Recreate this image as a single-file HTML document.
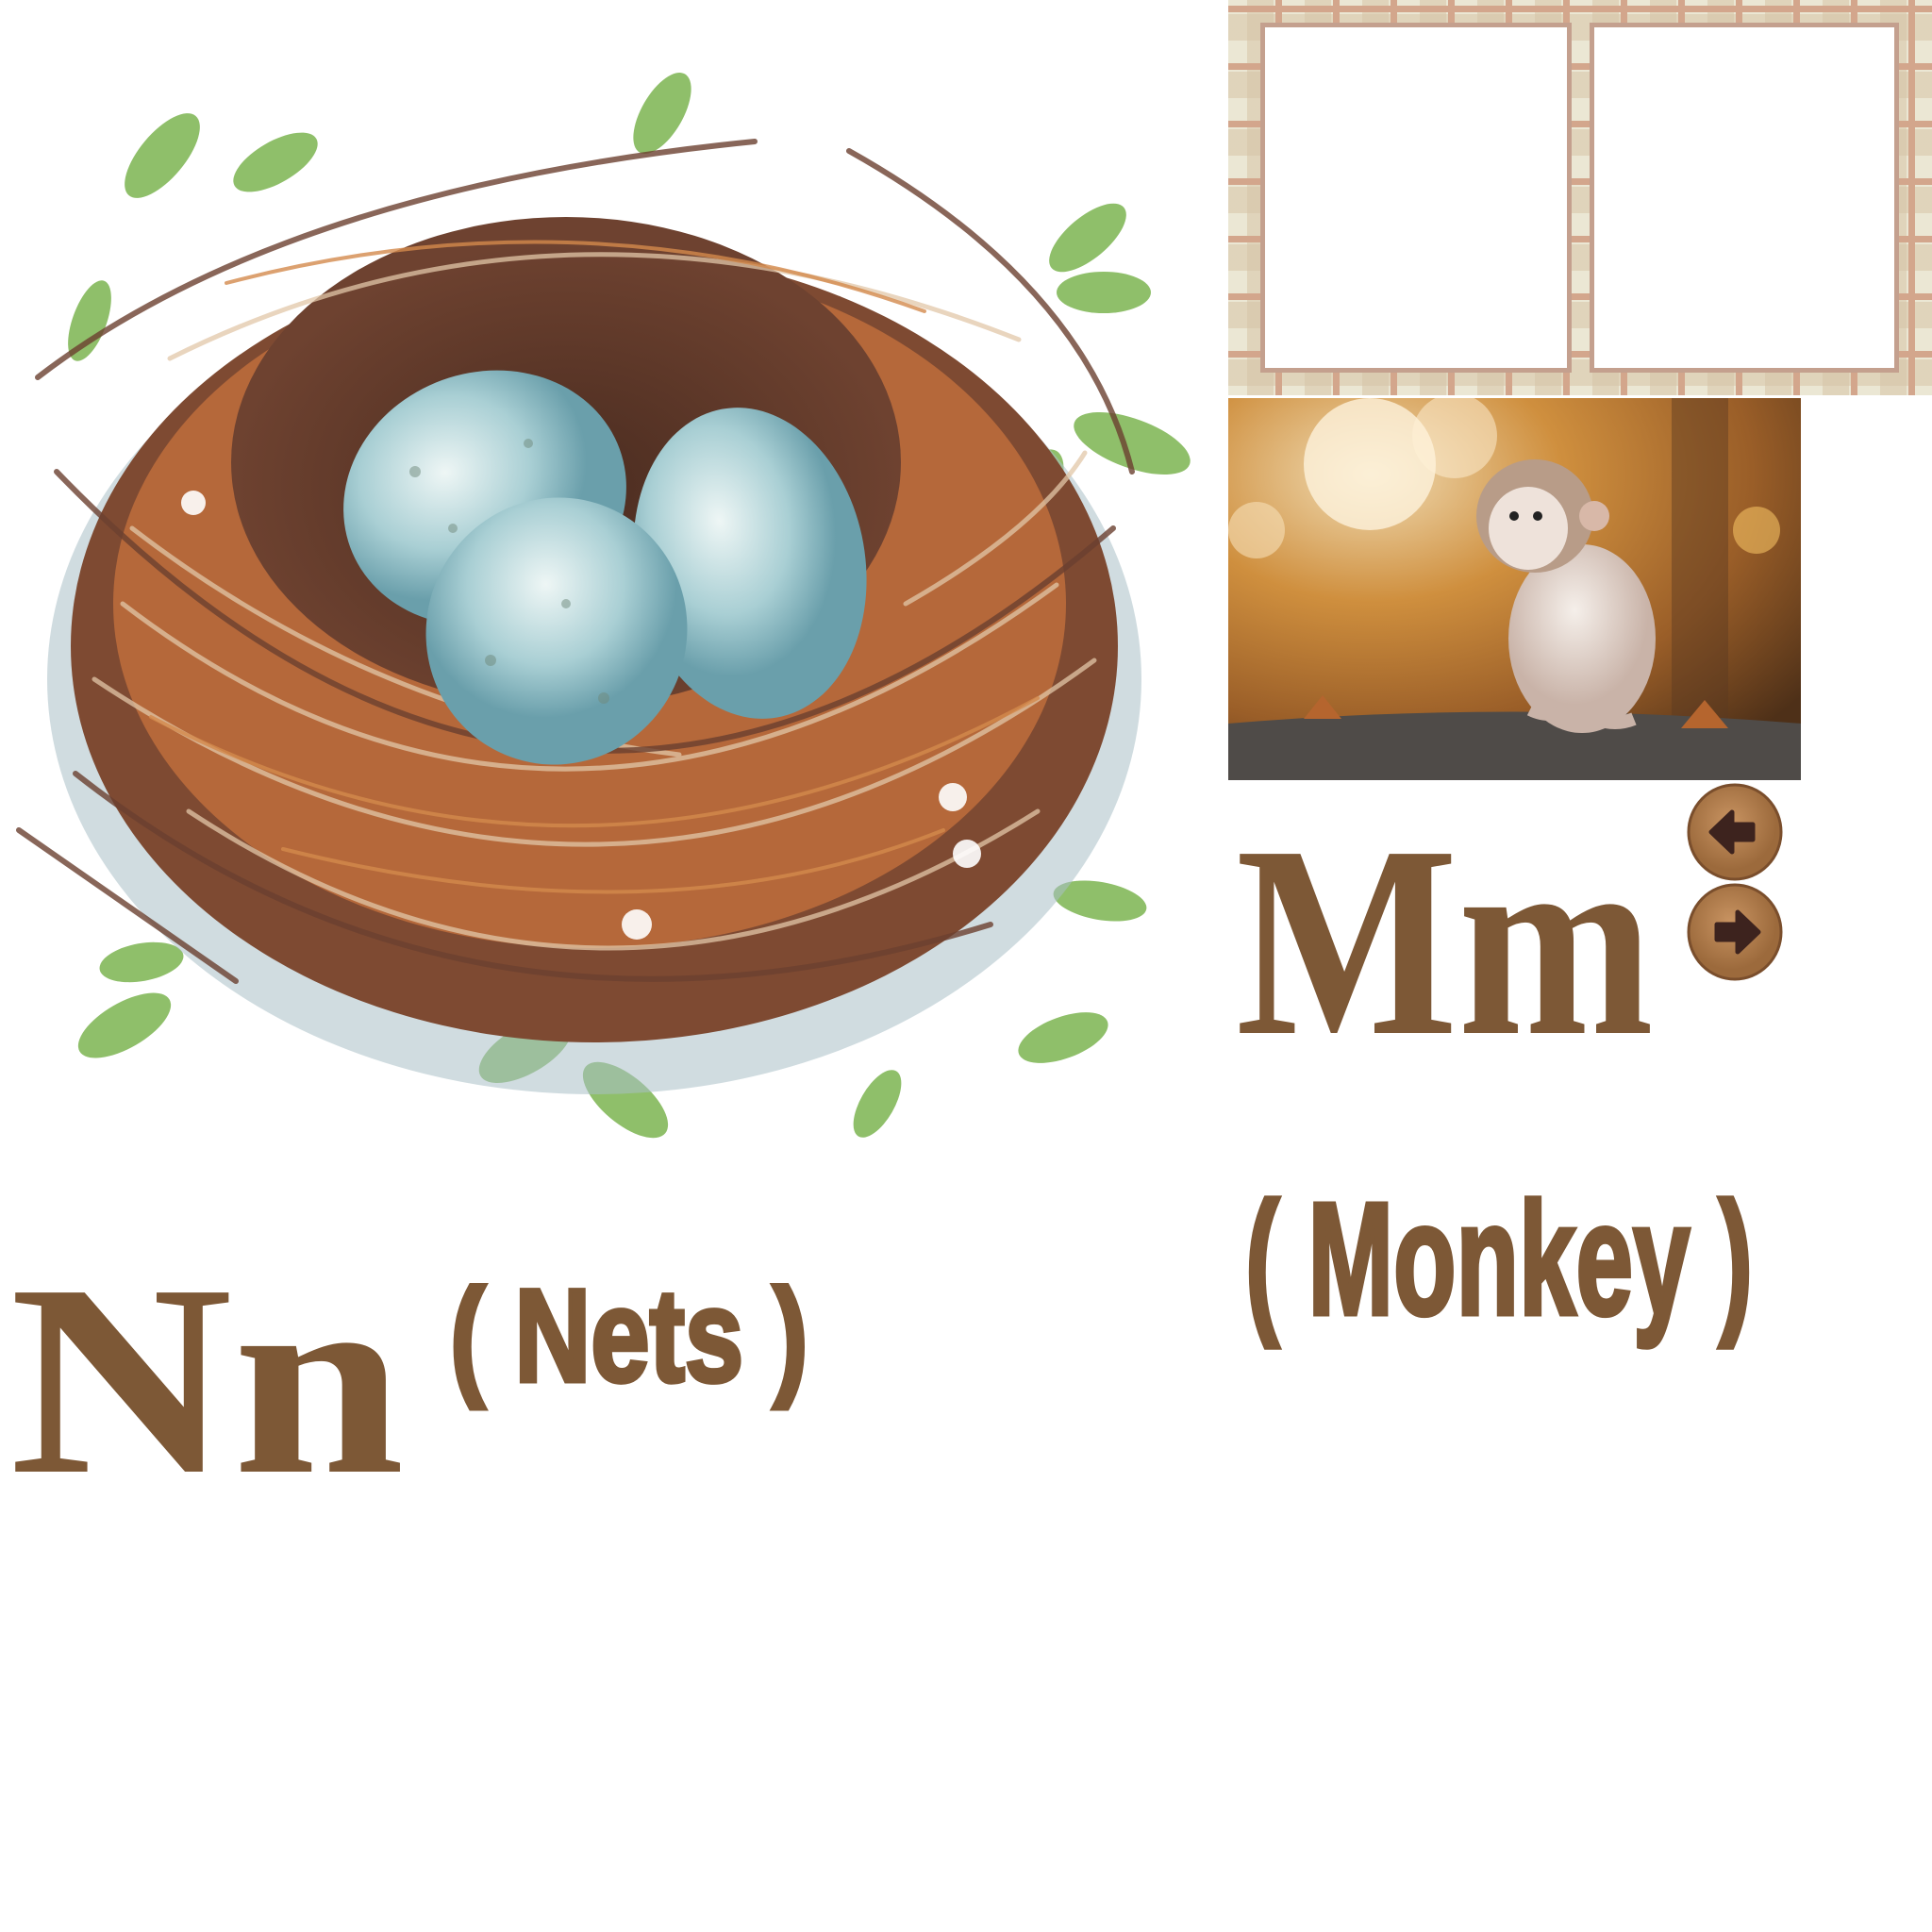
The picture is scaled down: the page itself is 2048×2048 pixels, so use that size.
<!DOCTYPE html>
<html><head><meta charset="utf-8"><style>
body{margin:0;width:2048px;height:2048px;background:#fff;position:relative;overflow:hidden;font-family:"Liberation Serif",serif}
.abs{position:absolute;white-space:nowrap}
.plaid{left:1302px;top:0;width:746px;height:419px;background-color:#ebe7d4;
background-image:
repeating-linear-gradient(90deg,transparent 0 50px,#d3a68c 50px 57px,transparent 57px 61px),
repeating-linear-gradient(0deg,transparent 0 40px,#d3a68c 40px 47px,transparent 47px 61px),
repeating-linear-gradient(90deg,transparent 0 20px,rgba(214,196,166,.55) 20px 48px,transparent 48px 61px),
repeating-linear-gradient(0deg,transparent 0 10px,rgba(214,196,166,.55) 10px 38px,transparent 38px 61px);}
.box{background:#fff;border:5px solid #c4a08e;top:24px;box-sizing:border-box;height:371px}
.big{color:#7d5836;font-weight:bold;font-size:290px;line-height:1;transform-origin:left top}
.cond{color:#7d5836;font-weight:bold;font-family:"Liberation Sans",sans-serif;transform-origin:left top;line-height:1;-webkit-text-stroke:5px #7d5836}
</style></head><body>
<svg class="abs" style="left:0;top:0" width="1300" height="1260" viewBox="0 0 1300 1260">
<defs>
<radialGradient id="egg" cx="40%" cy="35%"><stop offset="0" stop-color="#eef6f5"/><stop offset=".6" stop-color="#a9cfd4"/><stop offset="1" stop-color="#6a9fab"/></radialGradient>
<radialGradient id="cav" cx="50%" cy="55%"><stop offset="0" stop-color="#4a2c20"/><stop offset="1" stop-color="#6e4230"/></radialGradient>
</defs>
<g fill="#8fbf6a">
<ellipse cx="172" cy="165" rx="55" ry="24" transform="rotate(-50 172 165)"/>
<ellipse cx="292" cy="172" rx="50" ry="22" transform="rotate(-30 292 172)"/>
<ellipse cx="702" cy="120" rx="48" ry="22" transform="rotate(-60 702 120)"/>
<ellipse cx="1153" cy="252" rx="50" ry="22" transform="rotate(-40 1153 252)"/>
<ellipse cx="1170" cy="310" rx="50" ry="22" transform="rotate(0 1170 310)"/>
<ellipse cx="1200" cy="470" rx="65" ry="26" transform="rotate(20 1200 470)"/>
<ellipse cx="1090" cy="530" rx="60" ry="26" transform="rotate(-60 1090 530)"/>
<ellipse cx="1040" cy="490" rx="50" ry="22" transform="rotate(-20 1040 490)"/>
<ellipse cx="265" cy="545" rx="55" ry="22" transform="rotate(-20 265 545)"/>
<ellipse cx="160" cy="570" rx="50" ry="20" transform="rotate(15 160 570)"/>
<ellipse cx="1166" cy="955" rx="50" ry="20" transform="rotate(10 1166 955)"/>
<ellipse cx="132" cy="1087" rx="55" ry="24" transform="rotate(-30 132 1087)"/>
<ellipse cx="150" cy="1020" rx="45" ry="20" transform="rotate(-10 150 1020)"/>
<ellipse cx="557" cy="1113" rx="55" ry="25" transform="rotate(-30 557 1113)"/>
<ellipse cx="663" cy="1166" rx="55" ry="25" transform="rotate(40 663 1166)"/>
<ellipse cx="955" cy="928" rx="45" ry="22" transform="rotate(-50 955 928)"/>
<ellipse cx="1127" cy="1100" rx="50" ry="22" transform="rotate(-20 1127 1100)"/>
<ellipse cx="95" cy="340" rx="45" ry="18" transform="rotate(-70 95 340)"/>
<ellipse cx="930" cy="1170" rx="40" ry="18" transform="rotate(-60 930 1170)"/>
</g>
<ellipse cx="630" cy="720" rx="580" ry="440" fill="#a9bfc6" opacity=".55"/>
<ellipse cx="630" cy="685" rx="555" ry="420" fill="#7e4a32"/>
<ellipse cx="625" cy="640" rx="505" ry="365" fill="#b5683a"/>
<ellipse cx="600" cy="490" rx="355" ry="260" fill="url(#cav)"/>
<g fill="none" stroke-linecap="round">
<g stroke="#e2c7a8" stroke-width="5" opacity=".75">
<path d="M130 640 Q600 1000 1120 620"/><path d="M100 720 Q640 1080 1160 700"/><path d="M180 380 Q600 170 1080 360"/><path d="M200 860 Q640 1150 1100 860"/><path d="M140 560 Q400 760 720 800"/><path d="M960 640 Q1100 560 1150 480"/>
</g>
<g stroke="#6b4030" stroke-width="6" opacity=".8">
<path d="M60 500 Q600 1060 1180 560"/><path d="M40 400 Q300 200 800 150"/><path d="M900 160 Q1150 300 1200 500"/><path d="M80 820 Q500 1150 1050 980"/><path d="M20 880 L250 1040"/>
</g>
<g stroke="#d38a4c" stroke-width="4" opacity=".8">
<path d="M240 300 Q620 200 980 330"/><path d="M160 760 Q620 1000 1100 740"/><path d="M300 900 Q700 1000 1000 880"/>
</g>
</g>
<ellipse cx="514" cy="528" rx="152" ry="133" fill="url(#egg)" transform="rotate(-20 514 528)"/>
<ellipse cx="795" cy="597" rx="122" ry="166" fill="url(#egg)" transform="rotate(-10 795 597)"/>
<ellipse cx="590" cy="669" rx="138" ry="142" fill="url(#egg)" transform="rotate(20 590 669)"/>
<g fill="#6f8a7c" opacity=".5"><circle cx="440" cy="500" r="6"/><circle cx="480" cy="560" r="5"/><circle cx="560" cy="470" r="5"/><circle cx="520" cy="700" r="6"/><circle cx="600" cy="640" r="5"/><circle cx="640" cy="740" r="6"/></g>
<g fill="#fff" opacity=".9"><circle cx="675" cy="980" r="16"/><circle cx="1010" cy="845" r="15"/><circle cx="1025" cy="905" r="15"/><circle cx="205" cy="533" r="13"/></g>
</svg>
<div class="abs plaid"></div>
<div class="abs box" style="left:1336px;width:330px"></div>
<div class="abs box" style="left:1685px;width:328px"></div>
<svg class="abs" style="left:1302px;top:422px" width="607" height="405" viewBox="0 0 607 405">
<defs><radialGradient id="bk" cx="25%" cy="20%" r="95%"><stop offset="0" stop-color="#f0dcb4"/><stop offset=".35" stop-color="#cf8f3e"/><stop offset=".7" stop-color="#9a5e28"/><stop offset="1" stop-color="#4e3018"/></radialGradient>
<radialGradient id="mk" cx="45%" cy="35%"><stop offset="0" stop-color="#f5efea"/><stop offset="1" stop-color="#c9b3a8"/></radialGradient></defs>
<rect width="607" height="405" fill="url(#bk)"/>
<rect x="470" y="0" width="60" height="340" fill="#5a3a22" opacity=".45"/>
<circle cx="150" cy="70" r="70" fill="#fff6e2" opacity=".75"/>
<circle cx="240" cy="40" r="45" fill="#fff1d8" opacity=".5"/>
<circle cx="30" cy="140" r="30" fill="#f6e0b8" opacity=".6"/>
<circle cx="560" cy="140" r="25" fill="#f3c063" opacity=".6"/>
<path d="M0 345 Q300 320 607 345 V405 H0Z" fill="#4f4b48"/>
<path d="M80 340 l20 -25 l20 25Z M480 350 l25 -30 l25 30Z" fill="#b5652e"/>
<ellipse cx="375" cy="255" rx="78" ry="100" fill="url(#mk)"/>
<ellipse cx="325" cy="125" rx="62" ry="60" fill="#b89c88"/>
<ellipse cx="318" cy="138" rx="42" ry="44" fill="#eee2da"/>
<circle cx="388" cy="125" r="16" fill="#d8b8a8"/>
<circle cx="303" cy="125" r="5" fill="#222"/><circle cx="328" cy="125" r="5" fill="#222"/>
<path d="M320 330 q20 10 40 0 M390 340 q20 8 40 0" stroke="#c9b3a8" stroke-width="14"/>
</svg>
<svg class="abs" style="left:1788px;top:830px" width="104" height="212" viewBox="0 0 104 212">
<defs><radialGradient id="wd" cx="45%" cy="40%"><stop offset="0" stop-color="#c99462"/><stop offset="1" stop-color="#9c6a3c"/></radialGradient></defs>
<ellipse cx="51" cy="52" rx="49" ry="50" fill="url(#wd)" stroke="#7a4e2c" stroke-width="3"/>
<ellipse cx="51" cy="158" rx="49" ry="50" fill="url(#wd)" stroke="#7a4e2c" stroke-width="3"/>
<path d="M26 52 L48 31 L48 44 L70 44 L70 60 L48 60 L48 73Z" fill="#3d231e" stroke="#3d231e" stroke-width="5" stroke-linejoin="round"/>
<path d="M76 158 L54 137 L54 150 L32 150 L32 166 L54 166 L54 179Z" fill="#3d231e" stroke="#3d231e" stroke-width="5" stroke-linejoin="round"/>
</svg>
<div class="abs big" style="left:1310px;top:853px;transform:scaleX(.86)">Mm</div>
<div class="abs cond" style="left:1320px;top:1250px;font-size:170px;transform:scaleX(.64)">( Monkey )</div>
<div class="abs big" style="left:10px;top:1318px;transform:scaleX(1.13)">Nn</div>
<div class="abs cond" style="left:477px;top:1346px;font-size:140px;transform:scaleX(.8)">( Nets )</div>
</body></html>
